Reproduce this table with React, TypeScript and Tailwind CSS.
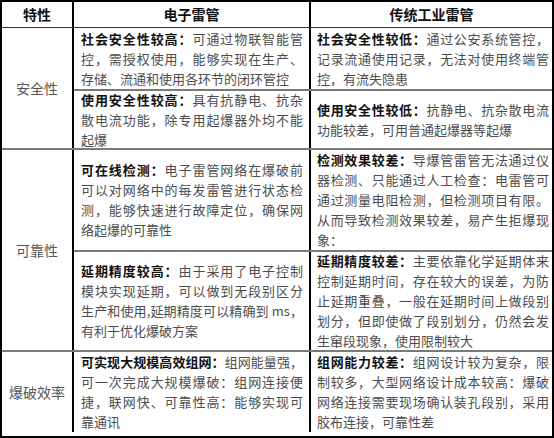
import React from 'react';

type Cell = { bold: string; lines: string[] };
type SubRow = { h: string; left: Cell; right: Cell };
type Section = { name: string; rows: SubRow[] };

const sections: Section[] = [
  {
    name: '安全性',
    rows: [
      {
        h: 'h-[61px]',
        left: {
          bold: '社会安全性较高：',
          lines: ['可通过物联智能管', '控，需授权使用，能够实现在生产、', '存储、流通和使用各环节的闭环管控'],
        },
        right: {
          bold: '社会安全性较低：',
          lines: ['通过公安系统管控，', '记录流通使用记录，无法对使用终端管', '控，有流失隐患'],
        },
      },
      {
        h: 'h-[59px]',
        left: {
          bold: '使用安全性较高：',
          lines: ['具有抗静电、抗杂', '散电流功能，除专用起爆器外均不能', '起爆'],
        },
        right: {
          bold: '使用安全性较低：',
          lines: ['抗静电、抗杂散电流', '功能较差，可用普通起爆器等起爆'],
        },
      },
    ],
  },
  {
    name: '可靠性',
    rows: [
      {
        h: 'h-[100px]',
        left: {
          bold: '可在线检测：',
          lines: [
            '电子雷管网络在爆破前',
            '可以对网络中的每发雷管进行状态检',
            '测，能够快速进行故障定位，确保网',
            '络起爆的可靠性',
          ],
        },
        right: {
          bold: '检测效果较差：',
          lines: [
            '导爆管雷管无法通过仪',
            '器检测、只能通过人工检查：电雷管可',
            '通过测量电阻检测，但检测项目有限。',
            '从而导致检测效果较差，易产生拒爆现',
            '象：',
          ],
        },
      },
      {
        h: 'h-[100px]',
        left: {
          bold: '延期精度较高：',
          lines: [
            '由于采用了电子控制',
            '模块实现延期，可以做到无段别区分',
            '生产和使用,延期精度可以精确到 ms，',
            '有利于优化爆破方案',
          ],
        },
        right: {
          bold: '延期精度较差：',
          lines: [
            '主要依靠化学延期体来',
            '控制延期时间，存在较大的误差，为防',
            '止延期重叠，一般在延期时间上做段别',
            '划分，但即使做了段别划分，仍然会发',
            '生窜段现象，使用限制较大',
          ],
        },
      },
    ],
  },
  {
    name: '爆破效率',
    rows: [
      {
        h: 'h-[80px]',
        left: {
          bold: '可实现大规模高效组网：',
          lines: ['组网能量强，', '可一次完成大规模爆破：组网连接便', '捷，联网快、可靠性高：能够实现可', '靠通讯'],
        },
        right: {
          bold: '组网能力较差：',
          lines: [
            '组网设计较为复杂，限',
            '制较多，大型网络设计成本较高：爆破',
            '网络连接需要现场确认装孔段别，采用',
            '胶布连接，可靠性差',
          ],
        },
      },
    ],
  },
];

const TextCell: React.FC<{ cell: Cell; className?: string }> = ({ cell, className }) => (
  <div className={`flex flex-col justify-center text-[13px] leading-[20px] text-[#4d4d4d] ${className ?? ''}`}>
    {cell.lines.map((line, i) => {
      const last = i === cell.lines.length - 1;
      return (
        <div
          key={i}
          className={`h-[20px] whitespace-nowrap ${last ? 'text-left' : 'text-justify [text-align-last:justify]'}`}
        >
          {i === 0 && <span className="font-bold text-[#111]">{cell.bold}</span>}
          {line}
        </div>
      );
    })}
  </div>
);

export default function App() {
  return (
    <div
      className="w-[554px] h-[438px] bg-white border-2 border-black flex flex-col"
      style={{ fontFamily: '"Noto Sans CJK SC", "Noto Sans", sans-serif' }}
    >
      {/* header */}
      <div className="flex h-[26px] border-b border-[#333] text-[14px] font-bold text-[#111]">
        <div className="w-[72px] border-r-2 border-black flex items-center justify-center">特性</div>
        <div className="w-[237px] border-r-2 border-black flex items-center justify-center">电子雷管</div>
        <div className="flex-1 flex items-center justify-center">传统工业雷管</div>
      </div>

      {sections.map((sec, si) => (
        <div key={sec.name} className={`flex ${si > 0 ? 'border-t-2 border-[#7a7a7a]' : ''}`}>
          <div className="w-[72px] border-r-2 border-black flex items-center justify-center text-[14px] text-[#555]">
            {sec.name}
          </div>
          <div className="flex-1 flex flex-col">
            {sec.rows.map((row, ri) => (
              <div key={ri} className={`flex ${row.h} ${ri > 0 ? 'border-t-2 border-[#7a7a7a]' : ''}`}>
                <TextCell cell={row.left} className="w-[237px] border-r-2 border-black pl-[7px] pr-[6px]" />
                <TextCell cell={row.right} className="flex-1 pl-[6px] pr-[3px]" />
              </div>
            ))}
          </div>
        </div>
      ))}
    </div>
  );
}
